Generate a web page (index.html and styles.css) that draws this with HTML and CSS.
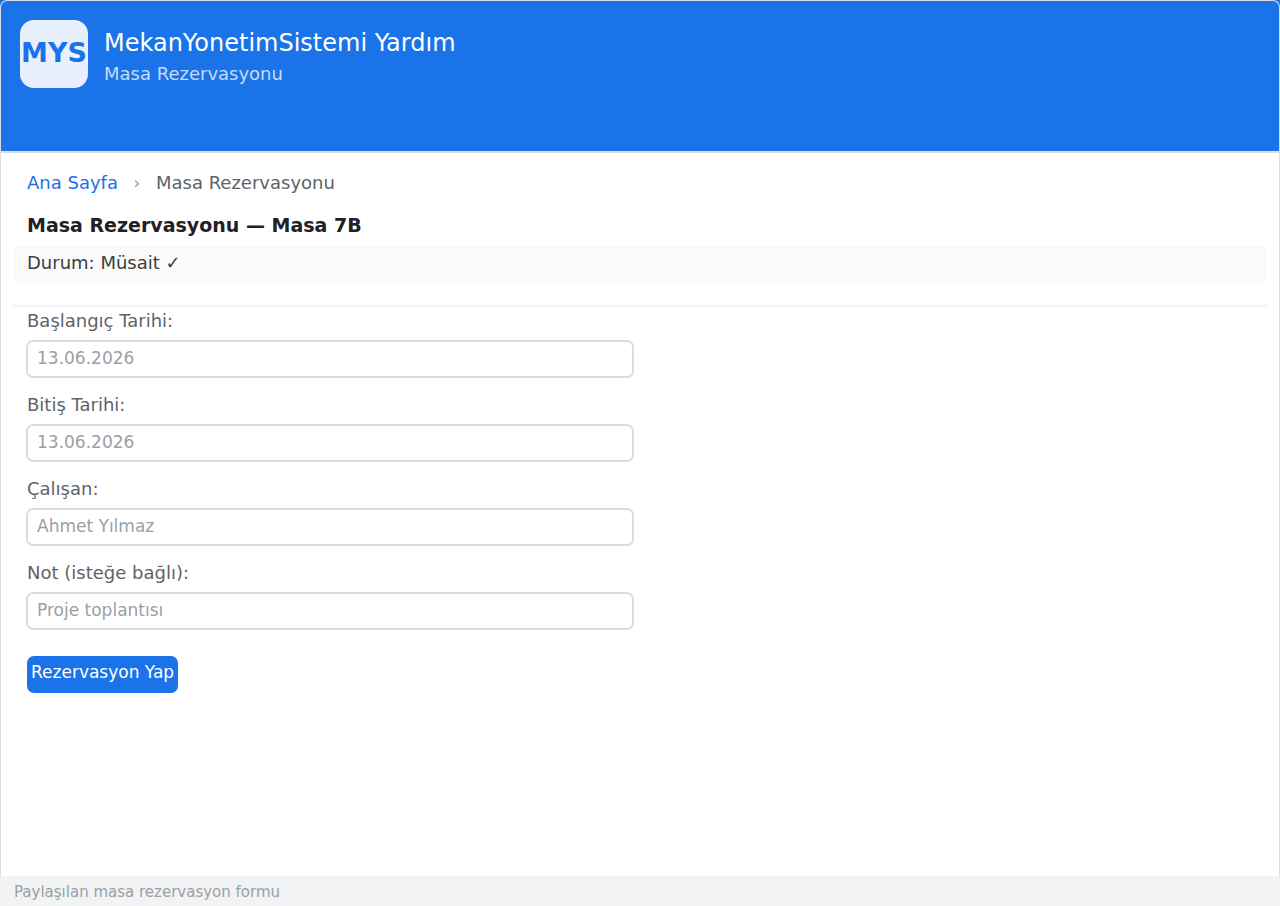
FILE: index.html
```html
<!DOCTYPE html>
<html lang="tr">
<head>
    <meta charset="UTF-8">
    <meta name="viewport" content="width=device-width, initial-scale=1.0">
    <title>MekanYonetimSistemi Yardım</title>
    <link rel="stylesheet" href="styles.css">
</head>
<body>

<div class="window">
    <div class="panel">
        <header class="header">
            <div class="logo">MYS</div>
            <div class="header-text">
                <div class="app-title">MekanYonetimSistemi Yardım</div>
                <div class="app-subtitle">Masa Rezervasyonu</div>
            </div>
        </header>

        <main class="content">
            <nav class="breadcrumb">
                <a href="#">Ana Sayfa</a>
                <span class="separator">›</span>
                <span>Masa Rezervasyonu</span>
            </nav>

            <h1>Masa Rezervasyonu — Masa 7B</h1>
            <div class="status">Durum: Müsait ✓</div>

            <!-- Reservation form -->
            <form class="form">
                <div class="field">
                    <label for="startDate">Başlangıç Tarihi:</label>
                    <input type="text" id="startDate" name="startDate" placeholder="13.06.2026">
                </div>
                <div class="field">
                    <label for="endDate">Bitiş Tarihi:</label>
                    <input type="text" id="endDate" name="endDate" placeholder="13.06.2026">
                </div>
                <div class="field">
                    <label for="employee">Çalışan:</label>
                    <input type="text" id="employee" name="employee" placeholder="Ahmet Yılmaz">
                </div>
                <div class="field">
                    <label for="note">Not (isteğe bağlı):</label>
                    <input type="text" id="note" name="note" placeholder="Proje toplantısı">
                </div>
                <button type="button" class="submit-btn">Rezervasyon Yap</button>
            </form>
        </main>
    </div>

    <footer class="footer">Paylaşılan masa rezervasyon formu</footer>
</div>

</body>
</html>
```
FILE: styles.css
```css
* {
    box-sizing: border-box;
}
body {
    margin: 0;
    font-family: "DejaVu Sans", sans-serif;
    font-size: 18px;
    line-height: 20px;
    color: #5f6368;
    background-color: #1a73e8;
}
.window {
    display: flex;
    flex-direction: column;
    min-height: 100vh;
}
.panel {
    flex: 1;
    border: 1px solid #dadce0;
    border-bottom: none;
    border-radius: 7px 7px 0 0;
    background-color: white;
    overflow: hidden;
}
.header {
    display: flex;
    gap: 16px;
    height: 152px;
    padding: 19px;
    background-color: #1a73e8;
    border-bottom: 2px solid #dadce0;
}
.logo {
    display: flex;
    justify-content: center;
    width: 68px;
    height: 68px;
    padding-top: 17px;
    border-radius: 14px;
    background-color: #e8f0fe;
    color: #1a73e8;
    font-size: 27px;
    font-weight: bold;
    line-height: 32px;
}
.header-text {
    padding-top: 9px;
}
.app-title {
    color: white;
    font-size: 24px;
    line-height: 28px;
}
.app-subtitle {
    margin-top: 7px;
    color: #c6dafc;
}
.content {
    padding: 20px 12px;
}
.breadcrumb {
    display: flex;
    padding: 0 14px;
}
.breadcrumb a {
    color: #1a73e8;
    text-decoration: none;
}
.separator {
    width: 38px;
    color: #9aa0a6;
    text-align: center;
}
h1 {
    margin: 20px 0 9px;
    padding: 0 14px;
    color: #202124;
    font-size: 19px;
    line-height: 24px;
}
.status {
    padding: 7px 14px 10px;
    border-radius: 4px;
    background-color: #fafafa;
    color: #3c4043;
}
.form {
    margin-top: 22px;
    padding: 4px 13px 0;
    border-top: 2px solid #f1f3f4;
}
.field {
    margin-bottom: 17px;
}
.field label {
    display: block;
    margin: 0 1px 9px;
}
.field input {
    display: block;
    width: 100%;
    max-width: 608px;
    height: 38px;
    padding: 0 9px 2px;
    border: 2px solid #dadce0;
    border-radius: 7px;
    background-color: white;
    font-family: inherit;
    font-size: 17px;
}
.field input::placeholder {
    color: #9aa0a6;
    opacity: 1;
}
.submit-btn {
    height: 37px;
    margin: 9px 1px 0;
    padding: 0 4px 5px;
    border: none;
    border-radius: 7px;
    background-color: #1a73e8;
    color: white;
    font-family: inherit;
    font-size: 17px;
    cursor: pointer;
}
.footer {
    padding: 6px 14px 4px;
    background-color: #f1f3f4;
    color: #9aa0a6;
    font-size: 15px;
}
```
